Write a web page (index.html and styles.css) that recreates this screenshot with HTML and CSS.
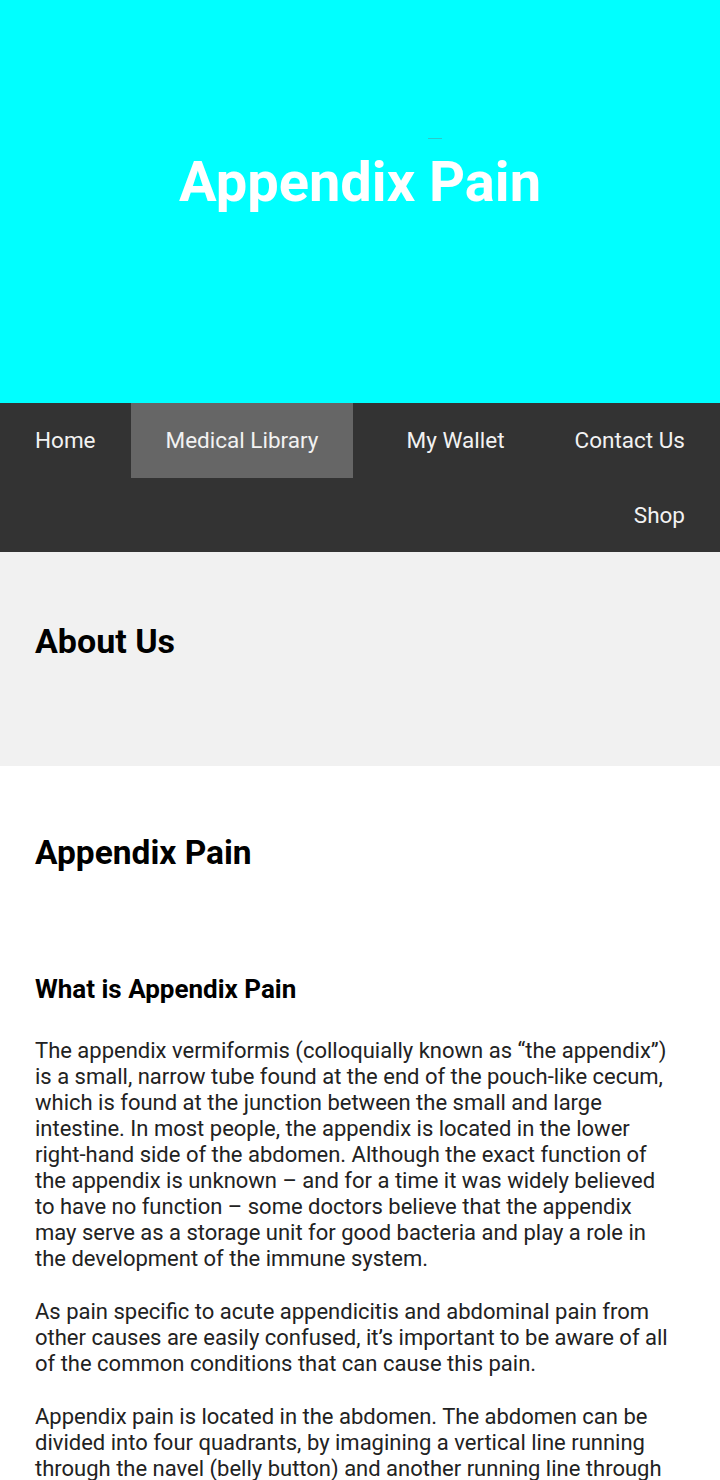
FILE: index.html
```html
<!DOCTYPE html>
<html lang="en">
<head>
<meta charset="utf-8">
<title>Appendix Pain</title>
<link rel="stylesheet" href="styles.css">
</head>
<body>
<header class="hero">
  <span class="hero-mark"></span>
  <h1 class="hero-title">Appendix Pain</h1>
</header>
<nav class="topnav">
  <a class="nav-link" href="#">Home</a>
  <a class="nav-link active" href="#">Medical Library</a>
  <a class="nav-link push" href="#">My Wallet</a>
  <a class="nav-link" href="#">Contact Us</a>
  <a class="nav-link push" href="#">Shop</a>
</nav>
<section class="about">
  <h2 class="about-title">About Us</h2>
</section>
<main class="content">
  <h2 class="content-title">Appendix Pain</h2>
  <h3 class="content-sub">What is Appendix Pain</h3>
  <p class="content-text">The appendix vermiformis (colloquially known as “the appendix”) is a small, narrow tube found at the end of the pouch-like cecum, which is found at the junction between the small and large intestine. In most people, the appendix is located in the lower right-hand side of the abdomen. Although the exact function of the appendix is unknown – and for a time it was widely believed to have no function – some doctors believe that the appendix may serve as a storage unit for good bacteria and play a role in the development of the immune system.</p>
  <p class="content-text">As pain specific to acute appendicitis and abdominal pain from other causes are easily confused, it’s important to be aware of all of the common conditions that can cause this pain.</p>
  <p class="content-text">Appendix pain is located in the abdomen. The abdomen can be divided into four quadrants, by imagining a vertical line running through the navel (belly button) and another running line through the navel horizontally, creating four regions of the abdomen.</p>
</main>
</body>
</html>
```

FILE: styles.css
```css
* { box-sizing: border-box; }
html, body { margin: 0; padding: 0; }
body {
  font-family: Roboto, "Noto Sans", Arial, sans-serif;
  color: #111;
  background: #fff;
  overflow: hidden;
}
.hero {
  position: relative;
  background: #00ffff;
  height: 403px;
  display: flex;
  align-items: center;
  justify-content: center;
}
.hero-mark {
  position: absolute;
  left: 428px;
  top: 138px;
  width: 14px;
  height: 1px;
  background: #2bc9c9;
}
.hero-title {
  margin: 0 0 37px;
  color: #fff;
  font-size: 56px;
  font-weight: 700;
  line-height: 1.2;
}
.topnav {
  background: #333;
  display: flex;
  flex-wrap: wrap;
}
.nav-link {
  display: block;
  color: #f2f2f2;
  text-decoration: none;
  font-size: 22.5px;
  line-height: 26.5px;
  padding: 24px 35px;
}
.nav-link.active { background: #666; }
.nav-link.push { margin-left: auto; }
.about {
  background: #f1f1f1;
  padding: 69px 35px 0;
  height: 214px;
}
.about-title {
  margin: 0;
  font-size: 34px;
  line-height: 40px;
  font-weight: 700;
  color: #000;
}
.content {
  padding: 68px 45px 0 35px;
}
.content-title {
  margin: 0;
  font-size: 33.5px;
  line-height: 38px;
  font-weight: 700;
  color: #000;
}
.content-sub {
  margin: 102px 0 0;
  font-size: 26px;
  line-height: 30px;
  font-weight: 700;
  color: #000;
}
.content-text {
  margin: 34px 0 0;
  font-size: 22px;
  line-height: 26px;
  color: #222;
}
.content-text + .content-text { margin-top: 27px; }
```
